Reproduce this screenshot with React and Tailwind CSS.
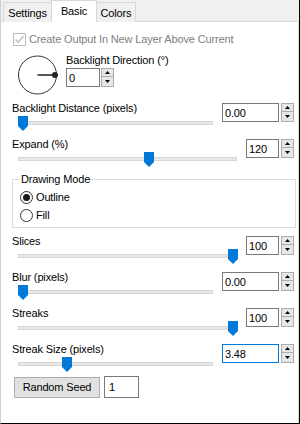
/* eslint-disable */

const fontClass = "font-['Liberation_Sans',Arial,sans-serif] text-[11px] leading-[14px] tracking-[-0.15px] text-black";

const sliders = [
  { label: 'Backlight Distance (pixels)', value: '0.00', thumb: 6, wide: true },
  { label: 'Expand (%)', value: '120', thumb: 132 },
];

const lowerSliders = [
  { label: 'Slices', value: '100', thumb: 216 },
  { label: 'Blur (pixels)', value: '0.00', thumb: 6, wide: true },
  { label: 'Streaks', value: '100', thumb: 216 },
  { label: 'Streak Size (pixels)', value: '3.48', thumb: 50, wide: true, focused: true, last: true },
];

function SpinButtons({ narrowGap }) {
  return (
    <div className={`${narrowGap ? 'ml-px' : 'ml-[2px]'} flex h-[19px] w-[13px] flex-col border border-[#adadad] bg-[#e6e6e6]`}>
      <div className="flex h-[8px] items-center justify-center border-b border-[#adadad]">
        <svg width="5" height="3" viewBox="0 0 5 3">
          <polygon points="2.5,0 5,3 0,3" fill="#000" />
        </svg>
      </div>
      <div className="flex flex-1 items-center justify-center">
        <svg width="5" height="3" viewBox="0 0 5 3">
          <polygon points="0,0 5,0 2.5,3" fill="#000" />
        </svg>
      </div>
    </div>
  );
}

function Spinner({ value, size, focused }) {
  const widthClass = size === 'wide' ? 'w-[57px]' : size === 'small' ? 'w-[34px]' : 'w-[33px]';
  return (
    <div className="flex h-[19px]">
      <div className={`flex h-full items-center border bg-white pl-[2px] ${widthClass} ${focused ? 'border-[#0078d7]' : 'border-[#7a7a7a]'}`}>
        {value}
      </div>
      <SpinButtons narrowGap={size === 'small'} />
    </div>
  );
}

function Thumb({ left }) {
  return (
    <svg className="absolute top-px" style={{ left }} width="10" height="15" viewBox="0 0 10 15">
      <polygon points="0,0 10,0 10,10 5,15 0,10" fill="#0078d7" />
    </svg>
  );
}

function SliderRow({ label, value, thumb, wide, focused, last }) {
  return (
    <div className={`flex pl-[11px] pr-[4px] ${last ? 'h-[35px]' : 'h-[36px]'}`}>
      <div className="flex flex-1 flex-col">
        <div className="h-[14px] whitespace-nowrap">{label}</div>
        <div className="relative h-[16px]">
          <div className="ml-[6px] mr-[9px] mt-[6px] h-[4px] border border-[#d6d6d6] bg-[#e7e7e7]" />
          <Thumb left={thumb} />
        </div>
      </div>
      <div className="mt-[2px]">
        <Spinner value={value} size={wide ? 'wide' : 'narrow'} focused={focused} />
      </div>
    </div>
  );
}

function Radio({ checked, label }) {
  return (
    <div className="flex h-[18px] items-center">
      <div className="flex h-[13px] w-[13px] items-center justify-center rounded-full border border-[#333] bg-white">
        {checked && <div className="h-[7px] w-[7px] rounded-full bg-[#1a1a1a]" />}
      </div>
      <span className="ml-[3px]">{label}</span>
    </div>
  );
}

export default function App() {
  return (
    <div className={`${fontClass} flex h-[424px] w-[300px] flex-col border-b border-l border-r border-b-black border-l-[#d0d0d0] border-r-black bg-[#f0f0f0]`}>
      {/* tab strip */}
      <div className="flex h-[22px] border-b border-[#d9d9d9] pl-[2px]">
        <div className="mt-[2px] h-[20px] w-[49px] border border-b-0 border-[#d9d9d9] bg-[#f0f0f0] pt-[3px] text-center">Settings</div>
        <div className="relative z-10 -ml-px h-[22px] w-[46px] border border-b-0 border-[#d9d9d9] bg-white pt-[3px] text-center">Basic</div>
        <div className="-ml-px mt-[2px] h-[20px] w-[40px] border border-b-0 border-[#d9d9d9] bg-[#f0f0f0] pt-[3px] text-center">Colors</div>
      </div>

      {/* panel */}
      <div className="flex flex-1 flex-col border-r border-[#d9d9d9] bg-white">
        <div className="ml-[12px] mt-[10px] flex h-[14px] items-center">
          <svg width="13" height="13" viewBox="0 0 13 13">
            <rect x="0.5" y="0.5" width="12" height="12" fill="#fff" stroke="#bcbcbc" />
            <path d="M2.5 6.5 L5.2 9.2 L10.5 3.2" fill="none" stroke="#bcbcbc" strokeWidth="1.4" />
          </svg>
          <span className="ml-[3px] text-[#808080]">Create Output In New Layer Above Current</span>
        </div>

        <div className="ml-[17px] mt-[7px] flex h-[42px]">
          <svg className="mt-[2px]" width="40" height="40" viewBox="0 0 40 40">
            <circle cx="19.5" cy="20" r="19" fill="none" stroke="#333" strokeWidth="1" />
            <line x1="19.5" y1="20" x2="37" y2="20" stroke="#555" strokeWidth="2" />
            <circle cx="37" cy="20" r="3" fill="#222" />
          </svg>
          <div className="ml-[8px] flex flex-col">
            <div className="h-[14px] whitespace-nowrap">Backlight Direction (°)</div>
            <div className="mt-px">
              <Spinner value="0" size="small" />
            </div>
          </div>
        </div>

        <div className="mt-[6px]">
          {sliders.map((s) => (
            <SliderRow key={s.label} {...s} />
          ))}
        </div>

        <div className="relative ml-[11px] mr-[2px] mt-[6px] h-[49px] border border-[#dcdcdc] pl-[7px] pt-[8px]">
          <div className="absolute -top-[8px] left-[7px] bg-white px-px">Drawing Mode</div>
          <Radio checked label="Outline" />
          <Radio label="Fill" />
        </div>

        <div className="mt-[6px]">
          {lowerSliders.map((s) => (
            <SliderRow key={s.label} {...s} />
          ))}
        </div>

        <div className="ml-[13px] -mt-px flex items-center gap-[4px]">
          <div className="flex h-[21px] w-[86px] items-center justify-center border border-[#adadad] bg-[#e1e1e1]">Random Seed</div>
          <div className="flex h-[22px] w-[35px] items-center border border-[#7a7a7a] bg-white pl-[4px]">1</div>
        </div>
      </div>
    </div>
  );
}
